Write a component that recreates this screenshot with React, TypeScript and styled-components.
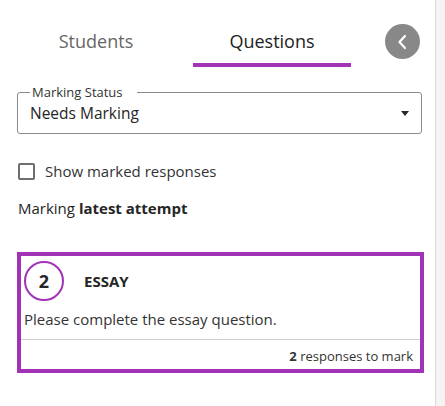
import React from 'react';
import styled, { createGlobalStyle } from 'styled-components';

const purple = '#a133b7';

const GlobalStyle = createGlobalStyle`
  html, body {
    margin: 0;
    padding: 0;
    background: #f4f4f4;
    font-family: 'Open Sans', 'Liberation Sans', sans-serif;
    color: #262626;
  }
`;

// white side panel with border on the right
const Panel = styled.div`
  width: 436px;
  min-height: 406px;
  background: #fff;
  border-right: 1px solid #dcdcdc;
  box-sizing: border-box;
`;

const TabBar = styled.div`
  display: flex;
  align-items: flex-start;
  padding: 18px 15px 0 17px;
  height: 49px;
`;

const Tab = styled.div<{ $active?: boolean }>`
  width: 158px;
  height: 49px;
  box-sizing: border-box;
  display: flex;
  align-items: center;
  justify-content: center;
  font-size: 18px;
  color: ${(p) => (p.$active ? '#222' : '#666')};
  border-bottom: 4px solid ${(p) => (p.$active ? purple : 'transparent')};
  padding-top: 1px;
  & + & {
    margin-left: 18px;
  }
`;

const BackButton = styled.button`
  margin-left: auto;
  margin-top: 6px;
  width: 35px;
  height: 35px;
  border-radius: 50%;
  border: none;
  background: #888;
  display: flex;
  align-items: center;
  justify-content: center;
  padding: 0;
`;

const Body = styled.div`
  padding: 20px 13px 0 17px;
`;

const Fieldset = styled.fieldset`
  margin: 0;
  height: 47px;
  box-sizing: border-box;
  border: 1px solid #8a8a8a;
  border-radius: 3px;
  padding: 0 12px 0 12px;
  display: flex;
  align-items: center;
`;

const Legend = styled.legend`
  font-size: 13px;
  color: #333;
  padding: 0 14px 0 2px;
  line-height: 11px;
`;

const SelectValue = styled.div`
  flex: 1;
  font-size: 15.5px;
  color: #262626;
  margin-top: -5px;
`;

const Caret = styled.div`
  width: 0;
  height: 0;
  border-left: 4px solid transparent;
  border-right: 4px solid transparent;
  border-top: 5px solid #262626;
  margin-top: -5px;
`;

const CheckRow = styled.label`
  display: flex;
  align-items: center;
  margin-top: 27px;
  font-size: 15px;
  color: #333;
  gap: 10px;
`;

const CheckBox = styled.span`
  width: 17px;
  height: 17px;
  box-sizing: border-box;
  border: 2px solid #6e6e6e;
  border-radius: 2px;
  margin-left: 1px;
`;

const AttemptLine = styled.div`
  margin-top: 17px;
  font-size: 15px;
  color: #262626;
  margin-left: 1px;
  b {
    font-weight: 700;
  }
`;

const Card = styled.div`
  margin-top: 34px;
  width: 407px;
  box-sizing: border-box;
  border: 4px solid ${purple};
`;

const CardHead = styled.div`
  display: flex;
  align-items: center;
  padding: 5px 0 0 3px;
`;

const Badge = styled.div`
  width: 40px;
  height: 40px;
  box-sizing: border-box;
  border-radius: 50%;
  border: 2px solid ${purple};
  display: flex;
  align-items: center;
  justify-content: center;
  font-size: 18px;
  font-weight: 700;
  color: #262626;
`;

const QType = styled.div`
  margin-left: 20px;
  font-size: 15px;
  font-weight: 700;
  color: #262626;
`;

const Prompt = styled.div`
  padding: 8px 0 0 3px;
  font-size: 15px;
  color: #333;
  height: 30px;
  border-bottom: 1px solid #d0d0d0;
`;

const CardFoot = styled.div`
  text-align: right;
  font-size: 13px;
  color: #333;
  padding: 7px 7px 4px 0;
  b {
    font-weight: 700;
  }
`;

const App: React.FC = () => {
  return (
    <>
      <GlobalStyle />
      <Panel>
        <TabBar>
          <Tab>Students</Tab>
          <Tab $active>Questions</Tab>
          <BackButton aria-label="Back">
            <svg width="16" height="16" viewBox="0 0 16 16">
              <path d="M10 2 L4.5 8 L10 14" fill="none" stroke="#fff" strokeWidth="2.2" strokeLinecap="round" strokeLinejoin="round" />
            </svg>
          </BackButton>
        </TabBar>

        <Body>
          <Fieldset>
            <Legend>Marking Status</Legend>
            <SelectValue>Needs Marking</SelectValue>
            <Caret />
          </Fieldset>

          <CheckRow>
            <CheckBox />
            Show marked responses
          </CheckRow>

          <AttemptLine>
            Marking <b>latest attempt</b>
          </AttemptLine>

          <Card>
            <CardHead>
              <Badge>2</Badge>
              <QType>ESSAY</QType>
            </CardHead>
            <Prompt>Please complete the essay question.</Prompt>
            <CardFoot>
              <b>2</b> responses to mark
            </CardFoot>
          </Card>
        </Body>
      </Panel>
    </>
  );
};

export default App;
